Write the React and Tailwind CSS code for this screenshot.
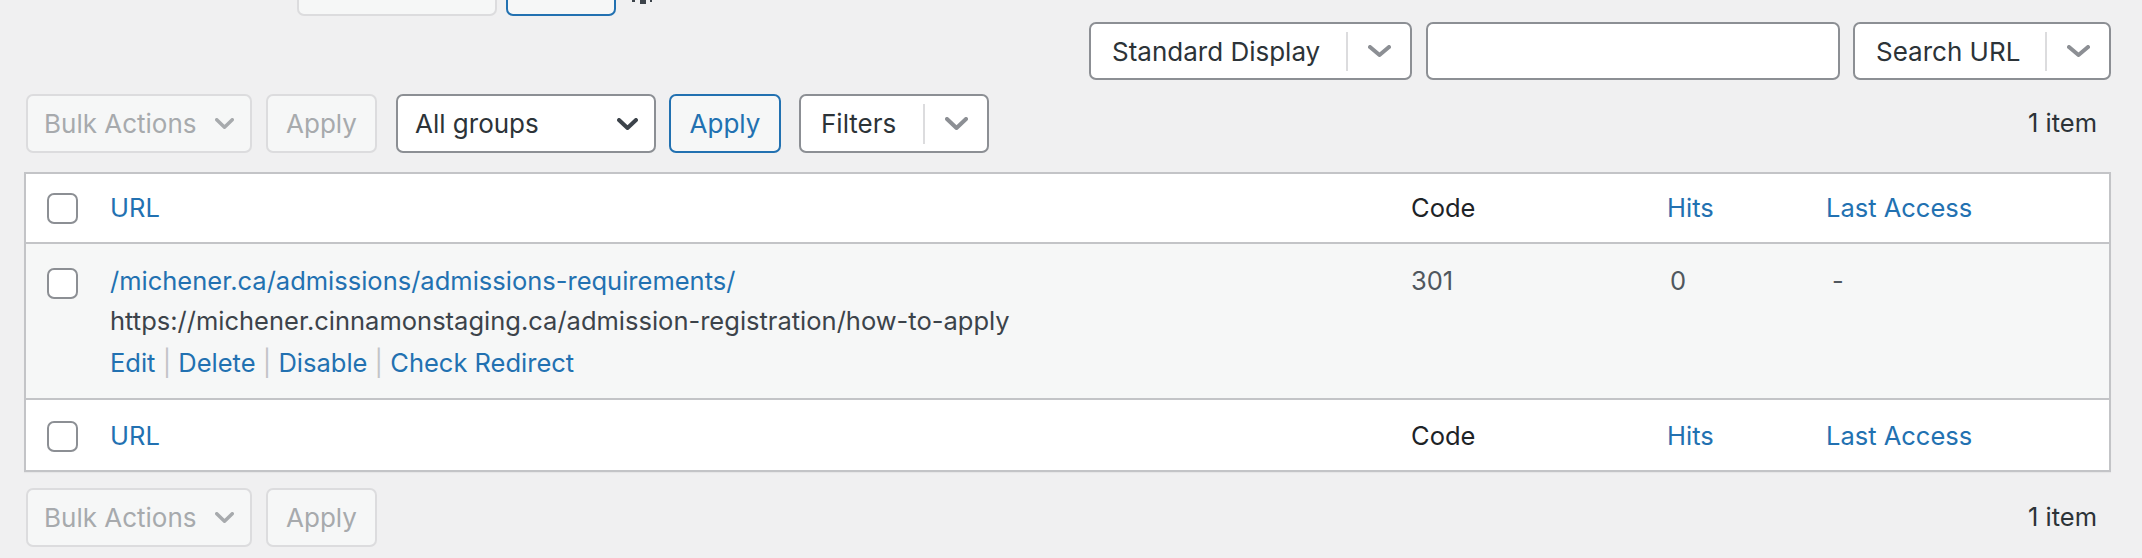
import React from "react";

const Chevron = ({ className = "", color = "#8c8f94", w = 22, h = 12, sw = 4 }) => (
  <svg width={w} height={h} viewBox={`0 0 ${w} ${h}`} className={className} fill="none">
    <polyline points={`${sw / 2},${sw / 2} ${w / 2},${h - sw / 2} ${w - sw / 2},${sw / 2}`} stroke={color} strokeWidth={sw} strokeLinecap="round" strokeLinejoin="round" />
  </svg>
);

const Checkbox = () => (
  <div className="w-[31px] h-[31px] rounded-[7px] border-2 border-[#8c8f94] bg-white shrink-0" />
);

const SplitSelect = ({ label, width }) => (
  <div className={`h-[58px] ${width} rounded-[7px] border-2 border-[#8c8f94] bg-white flex items-center shrink-0`}>
    <span className="pl-[21px] text-[26px] text-[#2c3338] whitespace-nowrap flex-1">{label}</span>
    <div className="w-[2px] h-[39px] bg-[#dcdcde]" />
    <div className="w-[62px] flex justify-center">
      <Chevron color="#8c8f94" w={23} h={12} sw={4} />
    </div>
  </div>
);

const HeaderRow = ({ footer }) => (
  <div className={`flex items-center bg-white ${footer ? "h-[70px] pt-[3px]" : "h-[68px]"} text-[25.5px]`}>
    <div className="w-[84px] pl-[21px] flex items-center">
      <Checkbox />
    </div>
    <div className="w-[1301px] text-[#2271b1]">URL</div>
    <div className="w-[256px] text-[#1d2327]">Code</div>
    <div className="w-[159px] text-[#2271b1]">Hits</div>
    <div className="flex-1 text-[#2271b1]">Last Access</div>
  </div>
);

const BulkRow = () => (
  <div className="flex items-center">
    <div className="ml-[2px] w-[226px] h-[59px] rounded-[7px] border-2 border-[#dcdcde] bg-[#f6f7f7] flex items-center pl-[16px] pr-[16px] justify-between">
      <span className="text-[26px] text-[#a7aaad] whitespace-nowrap">Bulk Actions</span>
      <Chevron color="#a7aaad" w={19} h={11} sw={3.5} />
    </div>
    <div className="ml-[14px] w-[111px] h-[59px] rounded-[7px] border-2 border-[#dcdcde] bg-[#f6f7f7] flex items-center justify-center">
      <span className="text-[26px] text-[#a7aaad]">Apply</span>
    </div>
  </div>
);

export default function App() {
  return (
    <div className="h-[558px] overflow-hidden bg-[#f0f0f1] pl-[24px] pr-[31px] font-['Inter','Liberation_Sans',sans-serif]">
      {/* partial top row */}
      <div className="flex items-end -mt-[43px] h-[59px] pl-[273px]">
        <div className="w-[200px] h-[59px] rounded-[7px] border-2 border-[#dcdcde] bg-[#f6f7f7]" />
        <div className="ml-[9px] w-[110px] h-[59px] rounded-[7px] border-2 border-[#2271b1] bg-[#f6f7f7]" />
        <svg width="24" height="59" viewBox="0 0 24 59" className="ml-[14px]">
          <rect x="2" y="43" width="3" height="2" fill="#3c434a" />
          <rect x="10" y="43" width="6" height="4" fill="#3c434a" />
          <rect x="20" y="43" width="2" height="2" fill="#3c434a" />
        </svg>
      </div>

      {/* search row */}
      <div className="mt-[6px] flex justify-end">
        <SplitSelect label="Standard Display" width="w-[323px]" />
        <div className="ml-[14px] w-[414px] h-[58px] rounded-[7px] border-2 border-[#8c8f94] bg-white" />
        <SplitSelect label="Search URL" width="ml-[13px] w-[258px]" />
      </div>

      {/* actions row */}
      <div className="mt-[14px] flex items-center">
        <BulkRow />
        <div className="ml-[19px] w-[260px] h-[59px] rounded-[7px] border-2 border-[#8c8f94] bg-white flex items-center justify-between pl-[17px] pr-[16px]">
          <span className="text-[26px] text-[#2c3338]">All groups</span>
          <Chevron color="#3c434a" w={21} h={12} sw={4} />
        </div>
        <div className="ml-[13px] w-[112px] h-[59px] rounded-[7px] border-2 border-[#2271b1] bg-[#f6f7f7] flex items-center justify-center">
          <span className="text-[26px] text-[#2271b1]">Apply</span>
        </div>
        <div className="ml-[18px] w-[190px] h-[59px] rounded-[7px] border-2 border-[#8c8f94] bg-white flex items-center">
          <span className="pl-[20px] text-[26px] text-[#2c3338] flex-1">Filters</span>
          <div className="w-[2px] h-[40px] bg-[#dcdcde]" />
          <div className="w-[62px] flex justify-center">
            <Chevron color="#8c8f94" w={23} h={13} sw={4} />
          </div>
        </div>
        <div className="flex-1" />
        <span className="text-[25.5px] text-[#2c3338] mr-[14px]">1 item</span>
      </div>

      {/* table */}
      <div className="mt-[19px] border-2 border-[#c3c4c7] shadow-[0_1px_1px_rgba(0,0,0,0.04)]">
        <HeaderRow />
        <div className="border-y-2 border-[#c3c4c7] bg-[#f6f7f7] h-[158px] flex text-[25.5px]">
          <div className="w-[84px] pl-[21px] pt-[24px]">
            <Checkbox />
          </div>
          <div className="w-[1301px] pt-[17px] leading-[40px]">
            <div className="text-[#2271b1]">/michener.ca/admissions/admissions-requirements/</div>
            <div className="text-[#3c434a]">https://michener.cinnamonstaging.ca/admission-registration/how-to-apply</div>
            <div className="text-[#2271b1] mt-[2px] whitespace-nowrap">
              Edit <span className="text-[#c3c4c7]">|</span> Delete <span className="text-[#c3c4c7]">|</span> Disable <span className="text-[#c3c4c7]">|</span> Check Redirect
            </div>
          </div>
          <div className="w-[256px] pt-[17px] leading-[40px] text-[#50575e]">301</div>
          <div className="w-[159px] pt-[17px] leading-[40px] text-[#50575e] pl-[3px]">0</div>
          <div className="flex-1 pt-[17px] leading-[40px] text-[#50575e] pl-[6px]">-</div>
        </div>
        <HeaderRow footer />
      </div>

      {/* bottom row */}
      <div className="mt-[16px] flex items-center">
        <BulkRow />
        <div className="flex-1" />
        <span className="text-[25.5px] text-[#2c3338] mr-[14px]">1 item</span>
      </div>
    </div>
  );
}
